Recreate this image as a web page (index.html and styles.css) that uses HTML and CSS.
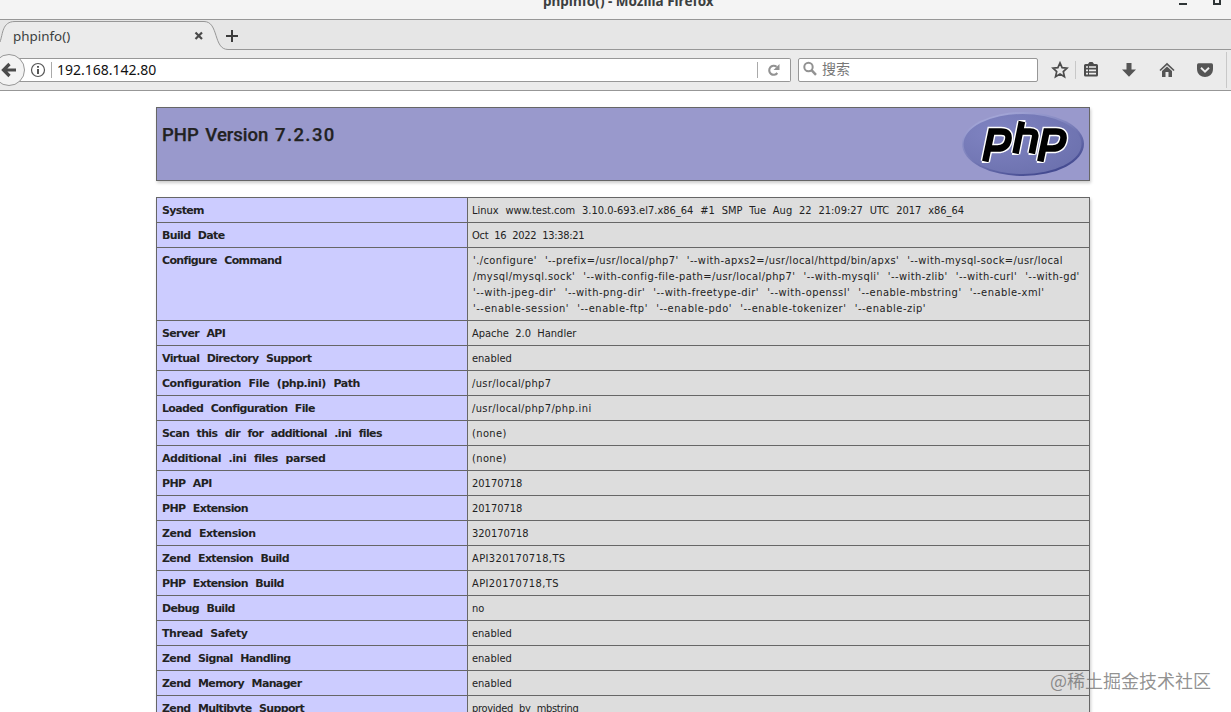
FILE: index.html
```html
<!DOCTYPE html>
<html lang="zh">
<head>
<meta charset="utf-8">
<title>phpinfo()</title>
<link rel="stylesheet" href="styles.css">
</head>
<body>
<header class="titlebar">
  <span class="title">phpinfo() - Mozilla Firefox</span>
  <span class="win-min"></span><span class="win-max"></span>
</header>
<div class="tabstrip">
  <svg class="tab-shape" width="1231" height="30" viewBox="0 0 1231 30">
    <path d="M0 22C3 14 2 1.500 15 1.500H204C219 1.500 213 29.500 228 29.500H1231V30H0Z" fill="#ebebeb"/>
    <path d="M0 22C3 14 2 1.500 15 1.500H204C219 1.500 213 29.500 228 29.500H1231" fill="none" stroke="#979797"/>
  </svg>
  <span class="tab-label">phpinfo()</span>
  <svg class="tab-close" width="10" height="10" viewBox="0 0 10 10"><path d="M1.500 1.500L8 8M8 1.500L1.500 8" stroke="#4a4a4a" stroke-width="2.200"/></svg>
  <svg class="tab-new" width="14" height="14" viewBox="0 0 14 14"><path d="M7 1V13M1 7H13" stroke="#3c3c3c" stroke-width="2"/></svg>
</div>
<nav class="toolbar">
  <div class="urlbar">
    <svg class="back" width="26" height="34" viewBox="0 0 26 34"><circle cx="9" cy="17" r="15.500" fill="#f3f3f3" stroke="#979797"/><path d="M16 17H4M9.500 11L3.500 17L9.500 23" fill="none" stroke="#4c4c4c" stroke-width="3.200"/></svg>
    <svg class="info" width="16" height="16" viewBox="0 0 16 16"><circle cx="8" cy="8" r="6.500" fill="none" stroke="#555" stroke-width="1.200"/><path d="M8 7V12M8 4V5.800" stroke="#444" stroke-width="1.800"/></svg>
    <span class="url-sep"></span>
    <span class="url">192.168.142.80</span>
    <span class="reload-sep"></span>
    <svg class="reload" width="14" height="14" viewBox="0 0 14 14"><path d="M10.300 10A4.500 4.500 0 1 1 9.600 3.800" fill="none" stroke="#929292" stroke-width="2.100"/><path d="M12.500 1V7H6.500Z" fill="#929292"/></svg>
  </div>
  <div class="search">
    <svg width="16" height="16" viewBox="0 0 16 16"><circle cx="6.500" cy="6" r="4.200" fill="none" stroke="#929292" stroke-width="2"/><path d="M9.500 9.200L14 13.800" stroke="#929292" stroke-width="2.500"/></svg>
    <span>搜索</span>
  </div>
  <div class="tools">
    <svg width="18" height="18" viewBox="0 0 18 18"><path d="M9 1.900L11.100 6.600L16 7.100L12.300 10.600L13.500 15.800L9 13.100L4.500 15.800L5.700 10.600L2 7.100L6.900 6.600Z" fill="none" stroke="#4c4c4c" stroke-width="1.700"/></svg>
    <span class="tool-sep"></span>
    <svg class="list" width="16" height="18" viewBox="0 0 16 18"><path d="M2.500 3H5L6.500 1H9.500L11 3H13.500Q15 3 15 4.500V14Q15 15.500 13.500 15.500H2.500Q1 15.500 1 14V4.500Q1 3 2.500 3Z" fill="#4c4c4c"/><path d="M3 6H5M6 6H13M3 9.300H5M6 9.300H13M3 12.600H5M6 12.600H13" stroke="#eee" stroke-width="1.700"/></svg>
    <svg class="down" width="16" height="18" viewBox="0 0 16 18"><path d="M5.500 2H10.500V8.500H15L8 15.800L1 8.500H5.500Z" fill="#555"/></svg>
    <svg class="home" width="16" height="18" viewBox="0 0 16 18"><path d="M1 9.500L8 3L15 9.500" fill="none" stroke="#555" stroke-width="1.700"/><path d="M3 10L8 5.500L13 10V16H9.500V11H6.500V16H3Z" fill="#555"/></svg>
    <svg class="pocket" width="18" height="18" viewBox="0 0 18 18"><path d="M2.500 2.200H15.500Q17 2.200 17 4V8C17 18.500 1 18.500 1 8V4Q1 2.200 2.500 2.200Z" fill="#555"/><path d="M5 6.800L9 10.600L13 6.800" fill="none" stroke="#eee" stroke-width="1.900"/></svg>
    <span class="tool-sep last"></span>
  </div>
</nav>
<main class="page">
  <section class="banner">
    <h1>PHP Version <span class="number">7.2.30</span></h1>
    <svg class="logo" width="124" height="68" viewBox="0 0 124 68">
      <defs><linearGradient id="rim" x1="0" y1="0" x2=".6" y2="1"><stop offset="0" stop-color="#b4b6e2"/><stop offset=".45" stop-color="#8589c2"/><stop offset="1" stop-color="#454b91"/></linearGradient>
      <radialGradient id="face" cx=".3" cy=".3" r=".85"><stop offset="0" stop-color="#8084c2"/><stop offset="1" stop-color="#6b70ad"/></radialGradient></defs>
      <ellipse cx="62" cy="34" rx="61" ry="32" fill="url(#rim)"/>
      <ellipse cx="61.500" cy="34" rx="59" ry="30" fill="url(#face)"/>
      <g fill="none" transform="translate(2.500 0)">
        <g stroke="#fff" stroke-width="9.500">
          <path d="M21.800 51.500L28 21.500H37.500Q46.500 21.500 44.800 30Q43 38.500 34 38.500H25"/>
          <path d="M52 43.500L58.400 11.500M57 21.500H66.500Q72.500 21.500 71.700 26.500L68.300 43.500"/>
          <path d="M76.800 51.500L83 21.500H92.500Q101.500 21.500 99.800 30Q98 38.500 89 38.500H80"/>
        </g>
        <g stroke="#fff" stroke-width="3" stroke-linecap="square"><path d="M19.800 51.500H24M50 43.500H54M66.500 43.500H70.500M56.500 11.500H60.500M74.800 51.500H79"/></g>
        <g stroke="#000" stroke-width="6.600">
          <path d="M21.800 51.500L28 21.500H37.500Q46.500 21.500 44.800 30Q43 38.500 34 38.500H25"/>
          <path d="M52 43.500L58.400 11.500M57 21.500H66.500Q72.500 21.500 71.700 26.500L68.300 43.500"/>
          <path d="M76.800 51.500L83 21.500H92.500Q101.500 21.500 99.800 30Q98 38.500 89 38.500H80"/>
        </g>
      </g>
    </svg>
  </section>
  <table class="info-table">
    <tr><th>System</th><td class="wide">Linux www.test.com 3.10.0-693.el7.x86_64 #1 SMP Tue Aug 22 21:09:27 UTC 2017 x86_64</td></tr>
    <tr><th>Build Date</th><td class="tight">Oct 16 2022 13:38:21</td></tr>
    <tr><th>Configure Command</th><td class="cmd"><div class="l1">'./configure' '--prefix=/usr/local/php7' '--with-apxs2=/usr/local/httpd/bin/apxs' '--with-mysql-sock=/usr/local</div><div class="l2">/mysql/mysql.sock' '--with-config-file-path=/usr/local/php7' '--with-mysqli' '--with-zlib' '--with-curl' '--with-gd'</div><div class="l3">'--with-jpeg-dir' '--with-png-dir' '--with-freetype-dir' '--with-openssl' '--enable-mbstring' '--enable-xml'</div><div class="l4">'--enable-session' '--enable-ftp' '--enable-pdo' '--enable-tokenizer' '--enable-zip'</div></td></tr>
    <tr><th>Server API</th><td>Apache 2.0 Handler</td></tr>
    <tr><th>Virtual Directory Support</th><td>enabled</td></tr>
    <tr><th class="roomy">Configuration File (php.ini) Path</th><td class="loose">/usr/local/php7</td></tr>
    <tr><th>Loaded Configuration File</th><td class="loose">/usr/local/php7/php.ini</td></tr>
    <tr><th>Scan this dir for additional .ini files</th><td class="loose">(none)</td></tr>
    <tr><th class="roomy">Additional .ini files parsed</th><td class="loose">(none)</td></tr>
    <tr><th>PHP API</th><td>20170718</td></tr>
    <tr><th>PHP Extension</th><td>20170718</td></tr>
    <tr><th class="roomy">Zend Extension</th><td>320170718</td></tr>
    <tr><th>Zend Extension Build</th><td class="loose">API320170718,TS</td></tr>
    <tr><th>PHP Extension Build</th><td class="loose">API20170718,TS</td></tr>
    <tr><th>Debug Build</th><td>no</td></tr>
    <tr><th class="roomy">Thread Safety</th><td>enabled</td></tr>
    <tr><th>Zend Signal Handling</th><td>enabled</td></tr>
    <tr><th>Zend Memory Manager</th><td>enabled</td></tr>
    <tr><th>Zend Multibyte Support</th><td class="tight">provided by mbstring</td></tr>
  </table>
</main>
<div class="watermark">@稀土掘金技术社区</div>
</body>
</html>
```
FILE: styles.css
```css
* { box-sizing: border-box; }
html, body { margin: 0; height: 712px; overflow: hidden; }
body { background: #fff; color: #222; position: relative; font-family: "Noto Sans", "Noto Sans CJK SC", sans-serif; }
svg { display: block; flex: none; }
.titlebar { height: 20px; background: #f4f4f4; border-bottom: 1px solid #979797; position: relative; overflow: hidden; }
.title { position: absolute; left: 543px; top: -10px; font-size: 13.5px; line-height: 22px; font-weight: bold; color: #3b3f40; white-space: nowrap; }
.win-min { position: absolute; left: 1179px; top: 3px; width: 8px; height: 2px; background: #2e3436; }
.win-max { position: absolute; left: 1213px; top: -3px; width: 8px; height: 8px; border: 2px solid #2e3436; }
.tabstrip { height: 30px; background: #e6e6e6; position: relative; display: flex; align-items: center; padding: 2px 0 0 13px; }
.tab-shape { position: absolute; left: 0; top: 0; }
.tab-label { position: relative; width: 181px; font-size: 13.4px; line-height: 20px; color: #3b3f40; }
.tab-close { position: relative; }
.tab-new { position: relative; margin-left: 21px; }
.toolbar { height: 41px; background: #ebebeb; border-bottom: 1px solid #979797; display: flex; align-items: center; }
.urlbar { width: 791px; height: 24px; background: #fff; border: 1px solid #979797; border-left: 0; border-radius: 0 2px 2px 0; display: flex; align-items: center; }
.back { margin-right: 4px; }
.url-sep, .reload-sep { width: 1px; height: 16px; background: #aaa; margin-left: 5px; }
.url { margin-left: 5px; font-size: 14px; line-height: 22px; color: #111; flex: 1; }
.reload { margin: 0 9px 0 9px; }
.search { width: 240px; height: 24px; margin-left: 7px; background: #fff; border: 1px solid #979797; border-radius: 2px; display: flex; align-items: center; gap: 4px; padding: 0 0 2px 3px; font-size: 14px; line-height: 20px; color: #777; }
.tools { display: flex; align-items: center; height: 40px; margin-left: 13px; }
.tool-sep { width: 1px; height: 18px; background: #c8c8c8; margin-left: 6px; }
.list { margin-left: 7px; }
.down, .home { margin-left: 22px; }
.pocket { margin-left: 21px; }
.last { margin-left: 12px; height: 36px; }
.page { width: 934px; margin: 16px 0 0 156px; }
.banner { height: 74px; background: #9999cc; border: 1px solid #666; box-shadow: 1px 2px 3px #ccc; display: flex; justify-content: space-between; margin-bottom: 16px; padding: 2px 4px 0 5px; }
.banner h1 { margin: 14px 0 0; font: 500 18.5px/22px Roboto, sans-serif; letter-spacing: 0; word-spacing: 2px; white-space: nowrap; -webkit-text-stroke: 0.25px #222; }
.number { letter-spacing: 1.4px; }
.info-table { width: 934px; table-layout: fixed; border-spacing: 0; border-right: 1px solid #666; box-shadow: 1px 2px 3px #ccc; font: 11px/16px "DejaVu Sans Condensed", "DejaVu Sans", sans-serif; }
.info-table th, .info-table td { border-top: 1px solid #666; border-left: 1px solid #666; padding: 5px 4px 3px; vertical-align: top; text-align: left; white-space: nowrap; }
.info-table th { width: 311px; background: #ccccff; padding-left: 5px; font-family: "DejaVu Sans", sans-serif; font-weight: bold; letter-spacing: -0.65px; word-spacing: 4.3px; }
.info-table th.roomy { letter-spacing: -0.47px; }
.info-table td { background: #ddd; word-spacing: 3.2px; }
.info-table .wide { word-spacing: 3.7px; }
.info-table .tight { letter-spacing: -0.3px; }
.info-table .loose { letter-spacing: 0.38px; }
.info-table .cmd { word-spacing: 4.5px; padding-left: 5px; }
.l1 { letter-spacing: 0.42px; }
.l2 { letter-spacing: 0.44px; }
.l3 { letter-spacing: 0.49px; }
.l4 { letter-spacing: 0.54px; }
.watermark { position: absolute; left: 1050px; top: 667px; font: 18px/26px "Noto Sans CJK SC", sans-serif; color: rgba(110,110,110,.75); white-space: nowrap; }
```
